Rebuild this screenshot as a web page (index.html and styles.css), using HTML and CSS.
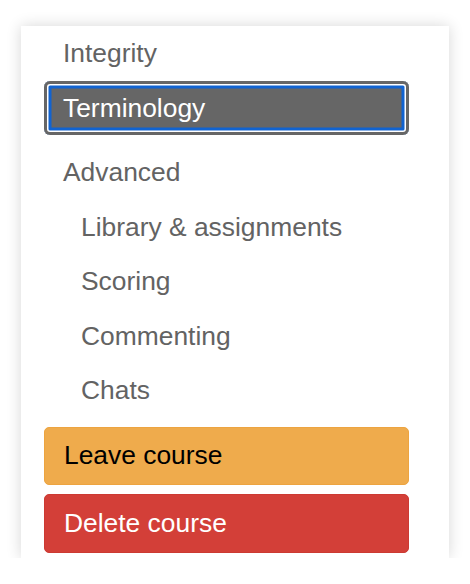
FILE: index.html
```html
<!DOCTYPE html>
<html>
<head>
<meta charset="utf-8">
<link rel="stylesheet" href="styles.css">
</head>
<body>
<div class="card">
  <nav class="nav">
    <a class="item">Integrity</a>
    <a class="item item-active">Terminology</a>
    <a class="item item-group">Advanced</a>
    <a class="item item-sub">Library &amp; assignments</a>
    <a class="item item-sub">Scoring</a>
    <a class="item item-sub">Commenting</a>
    <a class="item item-sub">Chats</a>
  </nav>
  <div class="actions">
    <button class="btn btn-warning">Leave course</button>
    <button class="btn btn-danger">Delete course</button>
  </div>
</div>
</body>
</html>
```
FILE: styles.css
```css
html, body {
  margin: 0;
  padding: 0;
  background: #ffffff;
}
body {
  padding: 26px 21px 0 21px;
  font-family: "Liberation Sans", Arial, sans-serif;
  font-size: 26.4px;
}
.card {
  width: 428px;
  height: 532px;
  box-sizing: border-box;
  background: #ffffff;
  box-shadow: 0 0 14px rgba(0, 0, 0, 0.16);
  padding: 0 40px 0 23px;
}
.nav {
  display: flex;
  flex-direction: column;
}
.item {
  display: block;
  height: 54.5px;
  line-height: 54.5px;
  padding-left: 19px;
  color: #636363;
  white-space: nowrap;
}
.item:first-child {
  height: 55px;
  line-height: 54px;
}
.item-active {
  height: 54px;
  line-height: 54px;
  color: #ffffff;
  background: #666666;
  border-radius: 6px;
  box-shadow: inset 0 0 0 3px #666666, inset 0 0 0 4.5px #ffffff, inset 0 0 0 7.5px #1163d0;
  margin-bottom: 10px;
}
.item-sub {
  padding-left: 37px;
}
.actions {
  display: flex;
  flex-direction: column;
  gap: 9px;
  margin-top: 9px;
}
.btn {
  display: block;
  width: 100%;
  height: 58.5px;
  text-align: left;
  padding: 0 0 0 19px;
  border-radius: 5px;
  font: inherit;
  cursor: pointer;
}
.btn-warning {
  background: #efab4c;
  border: 1px solid #eda440;
  color: #000000;
}
.btn-danger {
  background: #d33f38;
  border: 1px solid #cc3a33;
  color: #ffffff;
}
```
